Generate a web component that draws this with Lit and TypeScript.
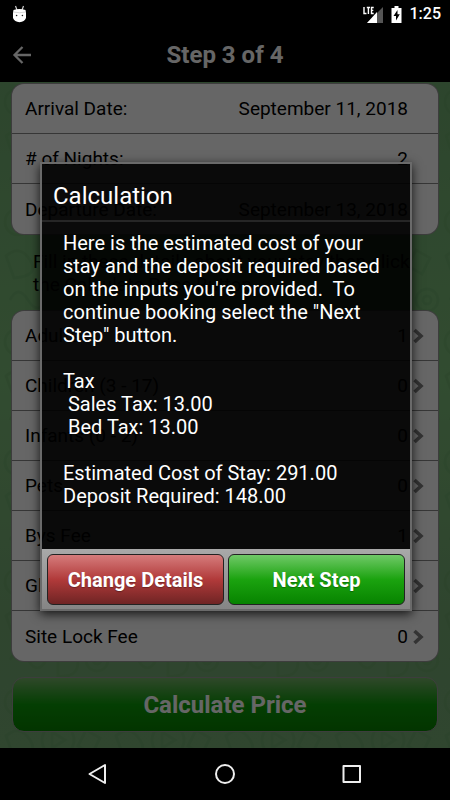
import { LitElement, html, css, svg } from "lit";
import { customElement, property } from "lit/decorators.js";

const stayRows = [
  ["Arrival Date:", "September 11, 2018"],
  ["# of Nights:", "2"],
  ["Departure Date:", "September 13, 2018"],
];

const guestRows = [
  ["Adults", "1"],
  ["Children (3 - 17)", "0"],
  ["Infants (0 - 2)", "0"],
  ["Pets", "0"],
  ["Bys Fee", "1"],
  ["Glamping", "0"],
  ["Site Lock Fee", "0"],
];

const message = `Here is the estimated cost of your stay and the deposit required based on the inputs you're provided.  To continue booking select the "Next Step" button.

Tax
 Sales Tax: 13.00
 Bed Tax: 13.00

Estimated Cost of Stay: 291.00
Deposit Required: 148.00`;

@customElement("status-bar")
class StatusBar extends LitElement {
  static styles = css`
    :host {
      display: flex;
      align-items: center;
      height: 28px;
      padding: 0 9px 0 12px;
      background: #000;
      color: #fff;
      font: 500 16px/28px Roboto, sans-serif;
    }
    .spacer {
      flex: 1;
    }
    .signal {
      margin-right: 8px;
    }
    .battery {
      margin-right: 8px;
    }
    svg {
      display: block;
    }
  `;
  render() {
    return html`
      <svg width="15" height="18" viewBox="0 0 15 18" aria-label="Notification">
        <path d="M3.500 1l1.500 4M11.500 1l-1.500 4" stroke="#ccc" stroke-width="1.200" />
        <path d="M1.500 5Q7.500 3 13.500 5L14 8V13Q12.500 17 7.500 17.200Q2.500 17 1 13V8Z" fill="#fff" />
        <path d="M1.500 7Q7.500 8.500 13.500 7" stroke="#ccc" stroke-width=".8" fill="none" />
        <circle cx="4.600" cy="10.500" r=".8" fill="#222" />
        <circle cx="10.400" cy="10.500" r=".8" fill="#222" />
      </svg>
      <span class="spacer"></span>
      <svg class="signal" width="20" height="18" viewBox="0 0 20 18" aria-label="LTE signal">
        <path d="M20 2V18H4Z" fill="#555" />
        <path d="M14 7V18H4Z" fill="#fff" />
        <rect x="0" y="0" width="11" height="10" fill="#000" />
        <path d="M1 2V8.500H3.500M3.800 2.500H7M5.400 2V9M10.700 2.500H8.500V8.500H10.700M8.500 5.400H10.300" stroke="#fff" stroke-width="1.400" fill="none" />
      </svg>
      <svg class="battery" width="11" height="17" viewBox="0 0 11 17" aria-label="Battery charging">
        <path d="M3.500 0H7.500V2H10.500V17H.5V2H3.500Z" fill="#fff" />
        <path d="M6.500 4L2.500 10H5V14.500L8.800 8.300H6.500Z" fill="#000" />
      </svg>
      <span>1:25</span>
    `;
  }
}

@customElement("doodle-backdrop")
class DoodleBackdrop extends LitElement {
  static styles = css`
    :host {
      display: block;
      background: linear-gradient(#71ad71, #7cbd79 45%, #76ac74 80%, #78ae76);
    }
    svg {
      display: block;
      width: 100%;
      height: 100%;
    }
  `;
  render() {
    return html`
      <svg aria-hidden="true">
        <defs>
          <pattern id="doodles" width="110" height="120" patternUnits="userSpaceOnUse">
            ${svg`<g fill="none" stroke="#5f9f60" stroke-opacity=".28" stroke-width="3">
              <circle cx="18" cy="20" r="13" /><circle cx="18" cy="20" r="6" />
              <path d="M44 8h24v20h-24zM44 16h24" />
              <path d="M84 28q2 -22 18 -20q-2 20 -18 20z" />
              <path d="M6 54q14 -12 24 4t-16 18z" />
              <circle cx="58" cy="58" r="16" /><path d="M52 50v16l13 -8z" />
              <path d="M86 48l14 8l-8 16l-14 -8z" />
              <path d="M10 98q8 -16 18 0t18 0" />
              <circle cx="97" cy="98" r="11" /><circle cx="97" cy="98" r="4" />
              <path d="M58 90q20 -6 20 10t-20 14z" />
            </g>`}
          </pattern>
        </defs>
        <rect width="100%" height="100%" fill="url(#doodles)" />
      </svg>
    `;
  }
}

@customElement("calculation-dialog")
class CalculationDialog extends LitElement {
  @property() text = "";
  static styles = css`
    :host {
      display: block;
      color: #fff;
      font-family: Roboto, sans-serif;
      background: rgba(0, 0, 0, 0.9);
      border: 2px solid #6a6a6a;
      box-shadow: 0 3px 10px rgba(0, 0, 0, 0.8);
    }
    .title {
      margin: 0;
      padding: 16px 11px 8px;
      font-size: 24px;
      line-height: 32px;
      font-weight: 400;
      border-bottom: 2px solid #262626;
    }
    .text {
      margin: 0;
      padding: 10px 21px 41px;
      font-size: 20px;
      line-height: 23px;
      white-space: pre-wrap;
    }
    .actions {
      display: grid;
      grid-template-columns: 1fr 1fr;
      gap: 4px;
      padding: 5px 5px 4px;
      background: linear-gradient(#a9a9a9, #858585);
    }
    .action {
      height: 51px;
      padding: 0;
      border: 1px solid #222;
      border-radius: 6px;
      color: #fff;
      font: 700 20px Roboto, sans-serif;
      text-shadow: 0 1px 1px rgba(0, 0, 0, 0.3);
    }
    .change {
      background: linear-gradient(#d67c7c, #b13a3a 50%, #6f2424);
    }
    .next {
      background: linear-gradient(#70c968, #1ba30f 50%, #078300);
    }
  `;
  render() {
    return html`
      <h2 class="title">Calculation</h2>
      <p class="text">${this.text}</p>
      <div class="actions">
        <button class="action change">Change Details</button>
        <button class="action next">Next Step</button>
      </div>
    `;
  }
}

@customElement("app-root")
class AppRoot extends LitElement {
  static styles = css`
    :host {
      display: flex;
      flex-direction: column;
      min-height: 100vh;
      background: #000;
      font-family: Roboto, sans-serif;
    }
    .stage {
      position: relative;
      flex: 1;
      display: flex;
      flex-direction: column;
    }
    .header {
      display: grid;
      grid-template-columns: 44px 1fr 44px;
      align-items: center;
      height: 54px;
      color: #fff;
    }
    .back {
      display: flex;
      padding: 0 0 0 12px;
      border: 0;
      background: none;
    }
    .heading {
      margin: 0;
      text-align: center;
      font-size: 24px;
      font-weight: 700;
    }
    .content {
      position: relative;
      flex: 1;
      padding: 2px 12px 16px;
    }
    .backdrop {
      position: absolute;
      inset: 0;
    }
    .form {
      position: relative;
      display: flex;
      flex-direction: column;
    }
    .card {
      margin: 0;
      overflow: hidden;
      background: #fff;
      box-shadow: 0 0 0 1px #999;
      border-radius: 12px;
    }
    .row {
      display: flex;
      justify-content: space-between;
      align-items: center;
      box-sizing: border-box;
      width: 100%;
      height: 50px;
      padding: 1px 30px 0 13px;
      border: 0;
      border-bottom: 1px solid #888;
      background: none;
      color: #000;
      font: 400 19px/24px Roboto, sans-serif;
    }
    .row:last-child {
      border-bottom: 0;
    }
    .link {
      padding-right: 14px;
    }
    .value {
      margin: 0;
    }
    .count {
      display: flex;
      align-items: center;
      gap: 5px;
    }
    .hint {
      margin: 0;
      padding: 16px 21px 15px;
      font-size: 19px;
      line-height: 23px;
      color: #000;
    }
    .calculate {
      height: 55px;
      margin-top: 16px;
      border: 1px solid #999;
      border-radius: 12px;
      color: #fff;
      font: 700 24px Roboto, sans-serif;
      background: linear-gradient(#75b468, #0c9c08 50%, #078300);
    }
    .overlay {
      position: absolute;
      inset: 0;
      display: flex;
      align-items: center;
      padding: 0 38px 3px 40px;
      background: rgba(0, 0, 0, 0.6);
    }
    .dialog {
      flex: 1;
    }
    .nav {
      display: flex;
      justify-content: center;
      gap: 103px;
      height: 52px;
    }
    .key {
      display: flex;
      align-items: center;
      padding: 0;
      border: 0;
      background: none;
    }
  `;
  render() {
    return html`
      <status-bar></status-bar>
      <div class="stage">
        <header class="header">
          <button class="back" aria-label="Back">
            <svg width="20" height="20" viewBox="0 0 20 20" fill="none" stroke="#fff" stroke-width="2.300">
              <path d="M19 10H2.500M10.500 2L2.500 10L10.500 18" />
            </svg>
          </button>
          <h1 class="heading">Step 3 of 4</h1>
        </header>
        <main class="content">
          <doodle-backdrop class="backdrop"></doodle-backdrop>
          <div class="form">
            <dl class="card">
              ${stayRows.map(
                ([label, value]) => html`<div class="row"><dt>${label}</dt><dd class="value">${value}</dd></div>`
              )}
            </dl>
            <p class="hint">Fill in these details about your stay then click the Calculate Price Button.</p>
            <div class="card">
              ${guestRows.map(
                ([label, value]) => html`
                  <button class="row link">
                    <span>${label}</span>
                    <span class="count">
                      ${value}
                      <svg width="11" height="16" viewBox="0 0 11 16" fill="none" stroke="#808080" stroke-width="3.600">
                        <path d="M1.500 2L8 8L1.500 14" />
                      </svg>
                    </span>
                  </button>
                `
              )}
            </div>
            <button class="calculate">Calculate Price</button>
          </div>
        </main>
        <div class="overlay">
          <calculation-dialog class="dialog" role="dialog" aria-label="Calculation" .text=${message}></calculation-dialog>
        </div>
      </div>
      <nav class="nav">
        <button class="key" aria-label="Back">
          <svg width="24" height="24" viewBox="0 0 24 24" fill="none" stroke="#eee" stroke-width="2" stroke-linejoin="round">
            <path d="M19 3V21L3.500 12Z" />
          </svg>
        </button>
        <button class="key" aria-label="Home">
          <svg width="24" height="24" viewBox="0 0 24 24" fill="none" stroke="#eee" stroke-width="2">
            <circle cx="12" cy="12" r="9" />
          </svg>
        </button>
        <button class="key" aria-label="Recent apps">
          <svg width="24" height="24" viewBox="0 0 24 24" fill="none" stroke="#eee" stroke-width="2" stroke-linejoin="round">
            <rect x="3.500" y="4" width="16.500" height="16" />
          </svg>
        </button>
      </nav>
    `;
  }
}
